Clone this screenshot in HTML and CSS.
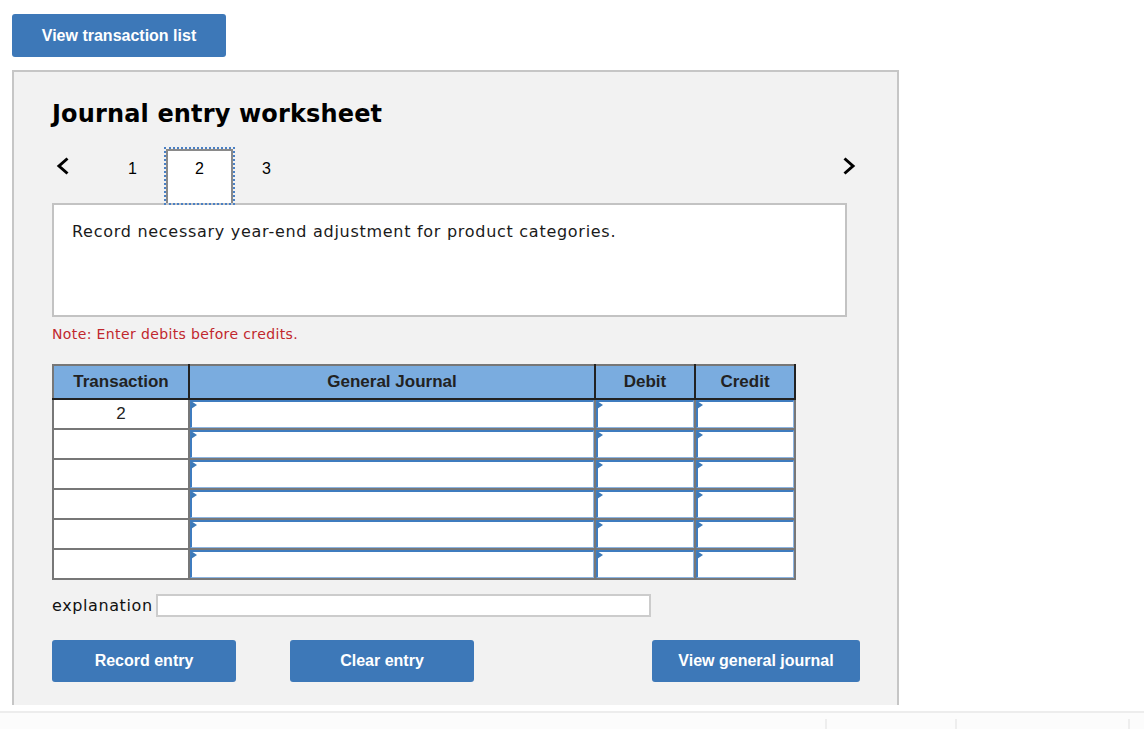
FILE: index.html
```html
<!DOCTYPE html>
<html lang="en">
<head>
    <meta charset="UTF-8">
    <meta name="viewport" content="width=device-width, initial-scale=1.0">
    <title>Journal entry worksheet</title>
    <link rel="stylesheet" href="styles.css">
</head>
<body>

    <button class="btn btn-list">View transaction list</button>

    <div class="worksheet">
        <h1>Journal entry worksheet</h1>

        <div class="steps">
            <span class="arrow">
                <svg width="14" height="18" viewBox="0 0 14 18"><path d="M11.5 1.5 L3 9 L11.5 16.5" fill="none" stroke="#000" stroke-width="3"/></svg>
            </span>
            <span class="step">1</span>
            <span class="step active">2</span>
            <span class="step">3</span>
            <span class="arrow arrow-right">
                <svg width="14" height="18" viewBox="0 0 14 18"><path d="M2.5 1.5 L11 9 L2.5 16.5" fill="none" stroke="#000" stroke-width="3"/></svg>
            </span>
        </div>

        <div class="question">
            Record necessary year-end adjustment for product categories.
        </div>

        <p class="note">Note: Enter debits before credits.</p>

        <table class="journal">
            <thead>
                <tr>
                    <th class="col-trans">Transaction</th>
                    <th class="col-account">General Journal</th>
                    <th class="col-amount">Debit</th>
                    <th class="col-amount">Credit</th>
                </tr>
            </thead>
            <tbody>
                <tr>
                    <td class="trans">2</td>
                    <td><div class="entry"></div></td>
                    <td><div class="entry"></div></td>
                    <td><div class="entry"></div></td>
                </tr>
                <tr>
                    <td class="trans"></td>
                    <td><div class="entry"></div></td>
                    <td><div class="entry"></div></td>
                    <td><div class="entry"></div></td>
                </tr>
                <tr>
                    <td class="trans"></td>
                    <td><div class="entry"></div></td>
                    <td><div class="entry"></div></td>
                    <td><div class="entry"></div></td>
                </tr>
                <tr>
                    <td class="trans"></td>
                    <td><div class="entry"></div></td>
                    <td><div class="entry"></div></td>
                    <td><div class="entry"></div></td>
                </tr>
                <tr>
                    <td class="trans"></td>
                    <td><div class="entry"></div></td>
                    <td><div class="entry"></div></td>
                    <td><div class="entry"></div></td>
                </tr>
                <tr>
                    <td class="trans"></td>
                    <td><div class="entry"></div></td>
                    <td><div class="entry"></div></td>
                    <td><div class="entry"></div></td>
                </tr>
            </tbody>
        </table>

        <div class="explanation">
            <label for="explanation">explanation</label>
            <input type="text" id="explanation">
        </div>

        <div class="actions">
            <button class="btn btn-record">Record entry</button>
            <button class="btn btn-clear">Clear entry</button>
            <button class="btn btn-journal">View general journal</button>
        </div>
    </div>

    <div class="footer">
        <div class="footer-cell first"></div>
        <div class="footer-cell second"></div>
        <div class="footer-cell third"></div>
        <div class="footer-cell"></div>
    </div>

</body>
</html>
```

FILE: styles.css
```css
html, body {
    margin: 0;
    padding: 0;
    overflow: hidden;
}
body {
    font-family: "DejaVu Sans", Verdana, sans-serif;
    background-color: #fff;
    color: #1a1a1a;
}
.btn {
    display: flex;
    align-items: center;
    justify-content: center;
    background-color: #3d78b8;
    color: #fff;
    border: none;
    border-radius: 3px;
    font-family: "Liberation Sans", Arial, sans-serif;
    font-weight: bold;
    font-size: 16px;
    padding: 0;
    cursor: pointer;
}
.btn-list {
    margin: 14px 0 0 12px;
    width: 214px;
    height: 43px;
}
.worksheet {
    box-sizing: border-box;
    margin: 13px 0 0 12px;
    width: 887px;
    height: 635px;
    padding: 0 0 0 38px;
    background-color: #f2f2f2;
    border: 2px solid #c6c6c6;
    border-bottom: none;
    overflow: hidden;
}
.worksheet h1 {
    margin: 27px 0 0;
    font-size: 24px;
    line-height: 30px;
    letter-spacing: 0.15px;
    color: #000;
}
/* step tabs */
.steps {
    display: flex;
    align-items: flex-start;
    width: 804px;
    height: 56px;
    margin-top: 18px;
}
.arrow {
    display: flex;
    width: 47px;
    margin-top: 10px;
    padding-left: 4px;
    box-sizing: border-box;
}
.arrow-right {
    margin-left: auto;
    width: 14px;
    padding: 0;
}
.step {
    display: flex;
    justify-content: center;
    width: 67px;
    height: 54px;
    padding-top: 13px;
    font-family: "Liberation Sans", Arial, sans-serif;
    font-size: 16px;
    line-height: 18px;
    color: #000;
    box-sizing: border-box;
}
.step.active {
    align-self: flex-end;
    background: #fff;
    border: 2px solid #8a8a8a;
    border-bottom: none;
    outline: 2px dotted #4a80c4;
    padding-top: 9px;
}
.question {
    box-sizing: border-box;
    width: 795px;
    height: 114px;
    padding: 17px 18px;
    background: #fff;
    border: 2px solid #c3c3c3;
    font-size: 16px;
    line-height: 20px;
    letter-spacing: 0.72px;
}
.note {
    margin: 8px 0 0;
    font-size: 14px;
    line-height: 18px;
    letter-spacing: 0.38px;
    color: #c1272d;
}
/* journal table */
.journal {
    margin-top: 21px;
    border-collapse: collapse;
    border: 2px solid #777;
    font-family: "Liberation Sans", Arial, sans-serif;
    font-size: 16px;
}
.journal th {
    height: 32px;
    padding: 0;
    background-color: #7aacdf;
    color: #222;
    font-size: 17px;
    font-weight: bold;
    border-top: 2px solid #777;
    border-left: 2px solid #222;
    border-right: 2px solid #222;
    border-bottom: 2px solid #222;
}
.journal th:first-child {
    border-left-color: #777;
}
.col-trans { width: 134px; }
.col-account { width: 404px; }
.col-amount { width: 98px; }
.journal td {
    height: 28px;
    padding: 0;
    border: 2px solid #777;
    background: #fff;
}
.journal td.trans {
    text-align: center;
    font-size: 17px;
    color: #222;
}
.entry {
    position: relative;
    box-sizing: border-box;
    height: 28px;
    background: #fff;
    border: 1px solid #8db5e2;
    border-top: 2px solid #3f7cbf;
    border-left: 2px solid #3f7cbf;
}
.entry::before {
    content: "";
    position: absolute;
    top: -1px;
    left: -1px;
    border-left: 6px solid #3d7ab8;
    border-top: 4px solid transparent;
    border-bottom: 4px solid transparent;
}
.explanation {
    display: flex;
    align-items: center;
    margin-top: 14px;
    height: 23px;
    font-size: 16px;
}
.explanation label {
    margin-right: 3px;
    letter-spacing: 0.6px;
    color: #111;
}
.explanation input {
    box-sizing: border-box;
    width: 495px;
    height: 23px;
    margin: 0;
    padding: 0 4px;
    border: 2px solid #ccc;
    background: #fff;
    outline: none;
}
.actions {
    display: flex;
    margin-top: 23px;
}
.actions .btn {
    height: 42px;
}
.btn-record {
    width: 184px;
}
.btn-clear {
    width: 184px;
    margin-left: 54px;
}
.btn-journal {
    width: 208px;
    margin-left: 178px;
}
/* footer strip */
.footer {
    display: flex;
    margin-top: 6px;
    height: 16px;
    border-top: 2px solid #ededed;
    background: #fcfcfc;
}
.footer-cell {
    margin-top: 6px;
    border-left: 2px solid #eee;
}
.footer-cell.first {
    width: 825px;
    border-left: none;
}
.footer-cell.second { width: 128px; }
.footer-cell.third { width: 171px; }
```
